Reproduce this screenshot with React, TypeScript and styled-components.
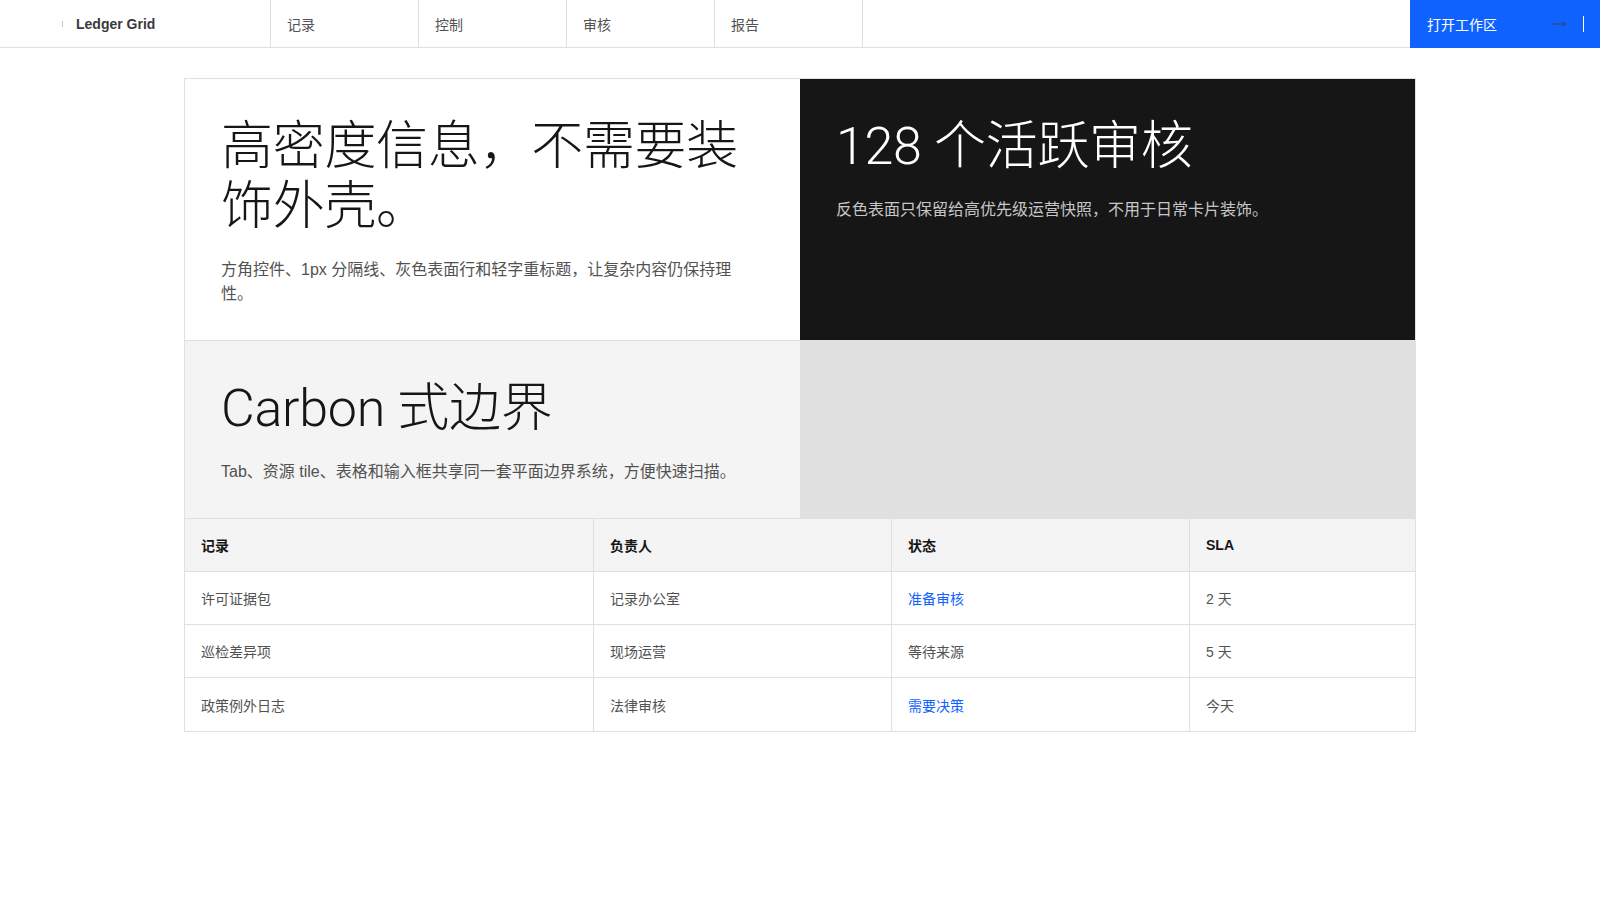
import React from "react";
import styled, { createGlobalStyle } from "styled-components";

const GlobalStyle = createGlobalStyle`
  * {
    box-sizing: border-box;
  }

  body {
    margin: 0;
    background: #ffffff;
    color: #161616;
    font-family: "Liberation Sans", "Noto Sans CJK SC", sans-serif;
  }
`;

const Header = styled.header`
  display: flex;
  align-items: stretch;
  height: 48px;
  border-bottom: 1px solid #e0e0e0;
  background: #ffffff;
`;

const Brand = styled.div`
  display: flex;
  align-items: center;
  gap: 13px;
  width: 271px;
  padding-left: 62px;
  border-right: 1px solid #e0e0e0;
  font-size: 14px;
  font-weight: 700;
  color: #393939;
`;

const BrandMark = styled.span`
  display: block;
  width: 1px;
  height: 6px;
  background: #c6c6c6;
`;

const NavItem = styled.a`
  display: flex;
  align-items: center;
  width: 148px;
  padding-left: 16px;
  border-right: 1px solid #e0e0e0;
  font-size: 14px;
  color: #525252;
  text-decoration: none;
`;

const Spacer = styled.div`
  flex: 1;
`;

const WorkspaceButton = styled.button`
  display: flex;
  align-items: center;
  justify-content: space-between;
  width: 190px;
  height: 48px;
  margin-bottom: -1px;
  padding: 0 16px 0 17px;
  border: none;
  background: #0f62fe;
  color: #ffffff;
  font-family: inherit;
  font-size: 14px;
  cursor: pointer;
`;

const ButtonEnd = styled.span`
  display: flex;
  align-items: center;
  gap: 16px;
`;

const Caret = styled.span`
  display: block;
  width: 1px;
  height: 16px;
  background: #ffffff;
`;

const Board = styled.main`
  width: 1232px;
  margin: 30px auto 0;
  border: 1px solid #e0e0e0;
`;

const TileGrid = styled.section`
  display: grid;
  grid-template-columns: 1fr 1fr;
`;

const Tile = styled.div<{ $tone: "white" | "dark" | "layer" | "muted" }>`
  padding: 38px 36px 34px;
  border-bottom: 1px solid #e0e0e0;
  background: ${(p) =>
    p.$tone === "dark"
      ? "#161616"
      : p.$tone === "layer"
      ? "#f4f4f4"
      : p.$tone === "muted"
      ? "#e0e0e0"
      : "#ffffff"};
  color: ${(p) => (p.$tone === "dark" ? "#ffffff" : "#161616")};
`;

const Display = styled.h1`
  margin: 0;
  max-width: 544px;
  font-family: Roboto, "Noto Sans CJK SC", sans-serif;
  font-size: 52px;
  font-weight: 300;
  line-height: 60px;
  letter-spacing: -0.3px;
`;

const Lead = styled.p<{ $inverse?: boolean }>`
  margin: 21px 0 0;
  max-width: 520px;
  font-size: 16px;
  line-height: 24px;
  color: ${(p) => (p.$inverse ? "#c6c6c6" : "#525252")};
`;

const Table = styled.div`
  display: grid;
  grid-template-columns: 409px 298px 298px 1fr;
`;

const Cell = styled.div<{ $head?: boolean; $last?: boolean; $endCol?: boolean }>`
  display: flex;
  align-items: center;
  height: 53px;
  padding: 0 16px;
  border-right: ${(p) => (p.$endCol ? "none" : "1px solid #e0e0e0")};
  border-bottom: ${(p) => (p.$last ? "none" : "1px solid #e0e0e0")};
  background: ${(p) => (p.$head ? "#f4f4f4" : "#ffffff")};
  font-size: 14px;
  font-weight: ${(p) => (p.$head ? 700 : 400)};
  color: ${(p) => (p.$head ? "#161616" : "#525252")};
`;

const StatusLink = styled.a`
  color: #0f62fe;
  text-decoration: none;
`;

const nav = ["记录", "控制", "审核", "报告"];

const columns = ["记录", "负责人", "状态", "SLA"];

const rows = [
  { record: "许可证据包", owner: "记录办公室", status: "准备审核", link: true, sla: "2 天" },
  { record: "巡检差异项", owner: "现场运营", status: "等待来源", link: false, sla: "5 天" },
  { record: "政策例外日志", owner: "法律审核", status: "需要决策", link: true, sla: "今天" },
];

const ArrowIcon = () => (
  <svg width="14" height="8" viewBox="0 0 14 8" fill="none">
    <path d="M0 4H12.5M10 1.5L12.8 4L10 6.5" stroke="#3a3f5c" strokeWidth="1" />
  </svg>
);

const App: React.FC = () => {
  return (
    <>
      <GlobalStyle />
      <Header>
        <Brand>
          <BrandMark />
          Ledger Grid
        </Brand>
        {nav.map((item) => (
          <NavItem key={item} href="#">
            {item}
          </NavItem>
        ))}
        <Spacer />
        <WorkspaceButton>
          打开工作区
          <ButtonEnd>
            <ArrowIcon />
            <Caret />
          </ButtonEnd>
        </WorkspaceButton>
      </Header>

      <Board>
        <TileGrid>
          <Tile $tone="white">
            <Display>高密度信息，不需要装饰外壳。</Display>
            <Lead>方角控件、1px 分隔线、灰色表面行和轻字重标题，让复杂内容仍保持理性。</Lead>
          </Tile>
          <Tile $tone="dark">
            <Display>128 个活跃审核</Display>
            <Lead $inverse>反色表面只保留给高优先级运营快照，不用于日常卡片装饰。</Lead>
          </Tile>
          <Tile $tone="layer">
            <Display>Carbon 式边界</Display>
            <Lead>Tab、资源 tile、表格和输入框共享同一套平面边界系统，方便快速扫描。</Lead>
          </Tile>
          <Tile $tone="muted" />
        </TileGrid>

        <Table>
          {columns.map((c, i) => (
            <Cell key={c} $head $endCol={i === columns.length - 1}>
              {c}
            </Cell>
          ))}
          {rows.map((r, ri) => {
            const last = ri === rows.length - 1;
            return (
              <React.Fragment key={r.record}>
                <Cell $last={last}>{r.record}</Cell>
                <Cell $last={last}>{r.owner}</Cell>
                <Cell $last={last}>
                  {r.link ? <StatusLink href="#">{r.status}</StatusLink> : r.status}
                </Cell>
                <Cell $last={last} $endCol>
                  {r.sla}
                </Cell>
              </React.Fragment>
            );
          })}
        </Table>
      </Board>
    </>
  );
};

export default App;
